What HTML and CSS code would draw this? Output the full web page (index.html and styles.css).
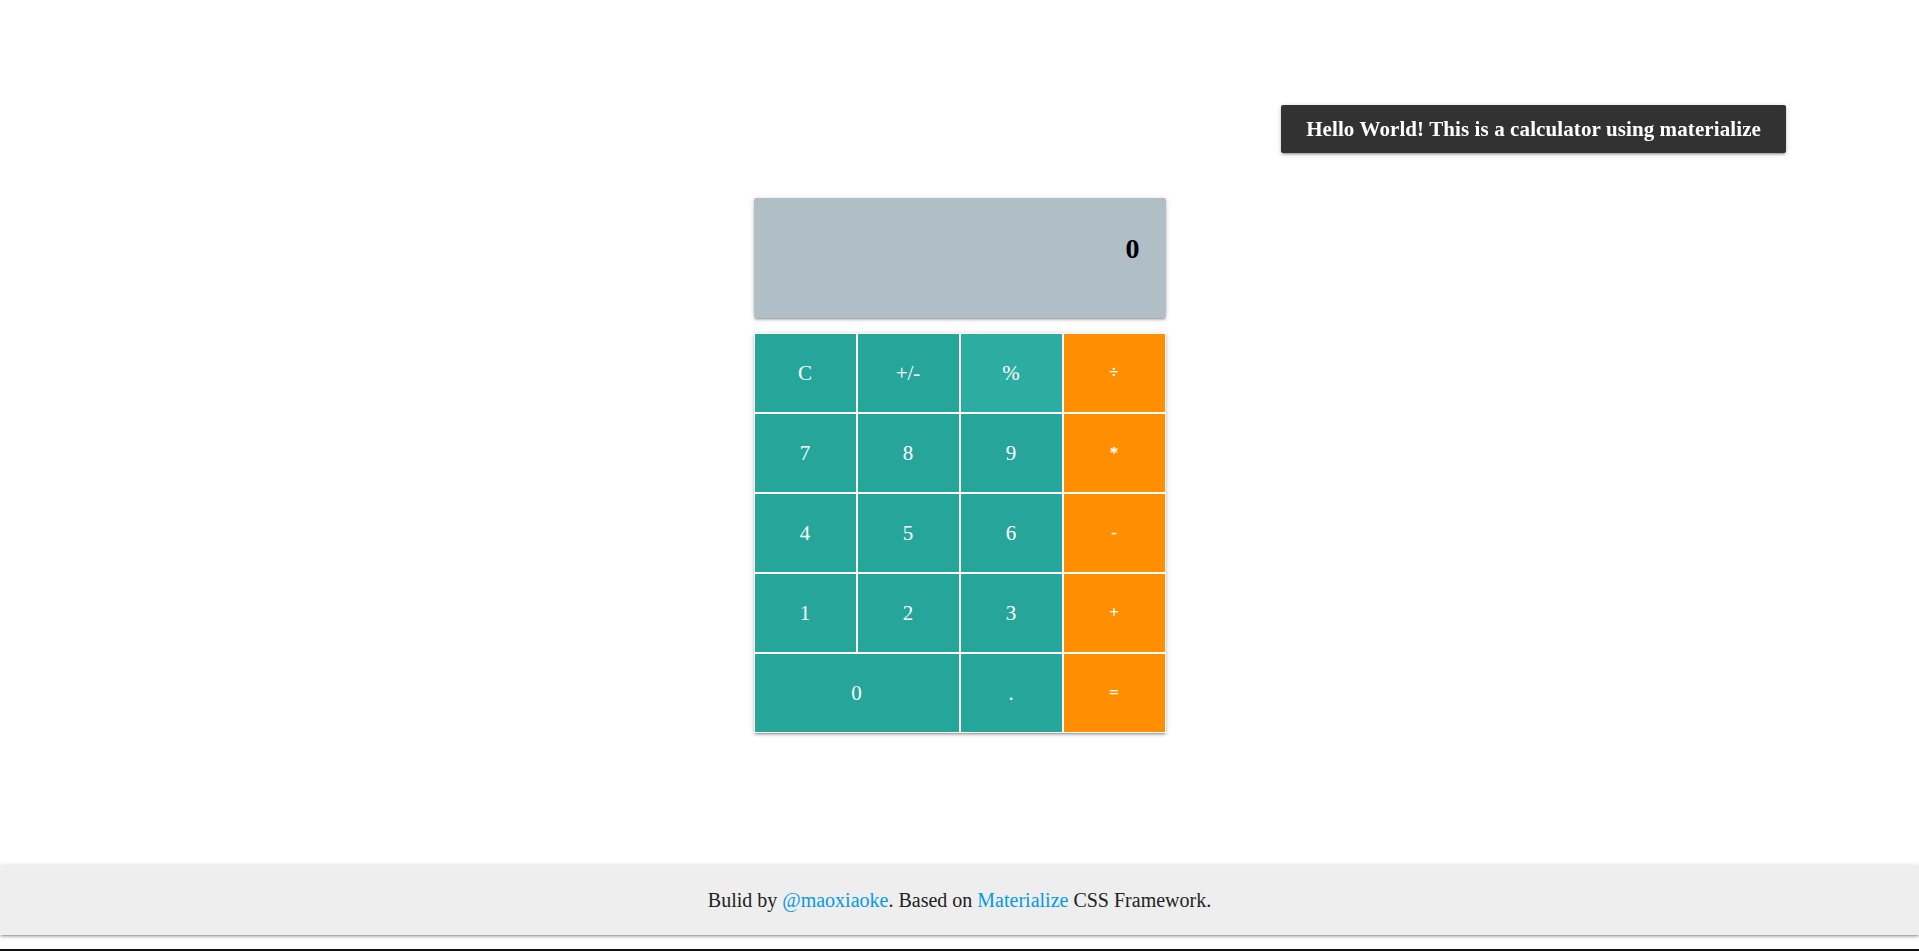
FILE: index.html
```html
<!DOCTYPE html>
<html lang="en">
<head>
<meta charset="utf-8">
<title>Calculator</title>
<link rel="stylesheet" href="styles.css">
</head>
<body>
<div class="page">
  <main class="main">
    <div class="calc">
      <div class="display"><span class="display-value">0</span></div>
      <div class="keypad">
        <div class="key">C</div>
        <div class="key">+/-</div>
        <div class="key key-active">%</div>
        <div class="key key-op">÷</div>
        <div class="key">7</div>
        <div class="key">8</div>
        <div class="key">9</div>
        <div class="key key-op">*</div>
        <div class="key">4</div>
        <div class="key">5</div>
        <div class="key">6</div>
        <div class="key key-op">-</div>
        <div class="key">1</div>
        <div class="key">2</div>
        <div class="key">3</div>
        <div class="key key-op">+</div>
        <div class="key key-wide">0</div>
        <div class="key">.</div>
        <div class="key key-op">=</div>
      </div>
    </div>
  </main>
  <footer class="footer">
    <p class="footer-text">Bulid by <a href="#" class="link">@maoxiaoke</a>. Based on <a href="#" class="link">Materialize</a> CSS Framework.</p>
  </footer>
  <div class="bottom-space"></div>
  <div class="bottom-line"></div>
</div>
<div class="toast">Hello World! This is a calculator using materialize</div>
</body>
</html>
```

FILE: styles.css
```css
html, body {
  margin: 0;
  padding: 0;
  background: #fff;
}

body {
  font-family: "Liberation Serif", "DejaVu Serif", serif;
  color: rgba(0, 0, 0, 0.87);
}

.page {
  height: 951px;
  display: flex;
  flex-direction: column;
  overflow: hidden;
}

.main {
  flex: 1;
  display: flex;
  justify-content: center;
  padding-top: 198px;
}

.calc {
  width: 412px;
  display: flex;
  flex-direction: column;
  gap: 15px;
}

.display {
  height: 120px;
  background: #b0bec5;
  border-radius: 2px;
  box-shadow: 0 2px 2px 0 rgba(0,0,0,.14), 0 3px 1px -2px rgba(0,0,0,.12), 0 1px 5px 0 rgba(0,0,0,.2);
  display: flex;
  justify-content: flex-end;
  align-items: flex-start;
  padding: 35px 26px 0;
  box-sizing: border-box;
}

.display-value {
  font-size: 28px;
  font-weight: bold;
  color: #000;
  line-height: 32px;
}

.keypad {
  background: #fff;
  padding: 1px;
  display: grid;
  grid-template-columns: repeat(4, 101px);
  grid-auto-rows: 78px;
  gap: 2px;
  box-shadow: 0 2px 2px 0 rgba(0,0,0,.14), 0 3px 1px -2px rgba(0,0,0,.12), 0 1px 5px 0 rgba(0,0,0,.2);
}

.key {
  background: #26a69a;
  color: #fff;
  display: flex;
  align-items: center;
  justify-content: center;
  font-size: 21px;
}

.key-active {
  background: #2baea1;
}

.key-op {
  background: #ff8f00;
  font-size: 17px;
  font-weight: bold;
}

.key-wide {
  grid-column: span 2;
}

.footer {
  height: 70px;
  background: #eeeeee;
  box-shadow: 0 2px 2px 0 rgba(0,0,0,.14), 0 3px 1px -2px rgba(0,0,0,.12), 0 1px 5px 0 rgba(0,0,0,.2);
  display: flex;
  align-items: center;
  justify-content: center;
  flex-shrink: 0;
}

.footer-text {
  margin: 0;
  font-size: 20px;
  color: #222;
}

.link {
  color: #039be5;
  text-decoration: none;
}

.bottom-space {
  height: 14px;
  flex-shrink: 0;
}

.bottom-line {
  height: 2px;
  background: #111;
  flex-shrink: 0;
}

.toast {
  position: fixed;
  top: 105px;
  right: 133px;
  height: 48px;
  box-sizing: border-box;
  padding: 0 25px;
  display: flex;
  align-items: center;
  background: #323232;
  color: #fff;
  font-size: 21px;
  letter-spacing: 0.1px;
  font-weight: bold;
  border-radius: 2px;
  box-shadow: 0 2px 2px 0 rgba(0,0,0,.14), 0 3px 1px -2px rgba(0,0,0,.12), 0 1px 5px 0 rgba(0,0,0,.2);
}
```
